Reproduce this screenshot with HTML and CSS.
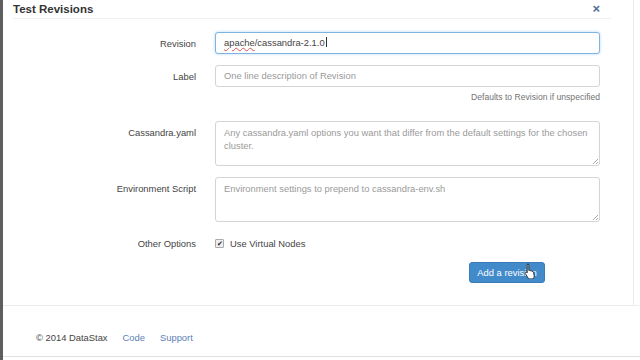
FILE: index.html
```html
<!DOCTYPE html>
<html lang="en">
<head>
    <meta charset="UTF-8">
    <title>Test Revisions</title>
    <link rel="stylesheet" href="styles.css">
</head>
<body>
    <div class="edge"></div>
    <div class="page">
        <div class="modal">
            <div class="modal-header">
                <h4>Test Revisions</h4>
                <span class="close">&times;</span>
            </div>

            <form class="form">
                <div class="row">
                    <label>Revision</label>
                    <div class="field">
                        <div class="input focused"><span class="typo">apache</span>/cassandra-2.1.0<span class="caret"></span></div>
                    </div>
                </div>
                <div class="row top">
                    <label>Label</label>
                    <div class="field">
                        <div class="input placeholder">One line description of Revision</div>
                        <p class="help">Defaults to Revision if unspecified</p>
                    </div>
                </div>
                <div class="row top">
                    <label>Cassandra.yaml</label>
                    <div class="field">
                        <div class="textarea placeholder">Any cassandra.yaml options you want that differ from the default settings for the chosen cluster.</div>
                    </div>
                </div>
                <div class="row top">
                    <label>Environment Script</label>
                    <div class="field">
                        <div class="textarea placeholder">Environment settings to prepend to cassandra-env.sh</div>
                    </div>
                </div>
                <div class="row options">
                    <label>Other Options</label>
                    <div class="field check">
                        <span class="box">&#10004;</span> Use Virtual Nodes
                    </div>
                </div>
                <div class="actions">
                    <button type="button" class="btn">Add a revision</button>
                    <!-- mouse pointer hovering the button -->
                    <svg class="pointer" width="12" height="16" viewBox="0 0 12 16">
                        <path d="M3.5 1.2c.8 0 1.3.5 1.3 1.2v5l.3-.1c.6-.3 1.3 0 1.5.5.6-.3 1.3 0 1.5.6.6-.2 1.3.1 1.4.7l.6 3.6c.2 1.3-.3 2.2-1 3.2H4.6L1.6 11c-.5-.6-.4-1.300.1-1.6.5-.3 1.1-.1 1.4.3l.1.2V2.4c0-.7.5-1.2 1.3-1.2z" fill="#fff" stroke="#222" stroke-width="0.9" stroke-linejoin="round"/>
                    </svg>
                </div>
            </form>
        </div>

        <footer class="footer">
            <span>&copy; 2014 DataStax</span>
            <a href="#">Code</a>
            <a href="#">Support</a>
        </footer>
    </div>
</body>
</html>
```

FILE: styles.css
```css
body {
    margin: 0;
    width: 640px;
    height: 360px;
    overflow: hidden;
    display: flex;
    background: #fff;
    font-family: "Liberation Sans", Arial, sans-serif;
    font-size: 9.4px;
    color: #333;
}
.edge {
    width: 3px;
    background: #5e5e5e;
}
.page {
    flex: 1;
    display: flex;
    flex-direction: column;
}
.modal {
    height: 305px;
    width: 631px;
    border-right: 1px solid #ececec;
    box-sizing: border-box;
}
.modal-header {
    margin: 0 22px 0 10px;
    height: 18px;
    border-bottom: 1px solid #f0f0f0;
    display: flex;
    justify-content: space-between;
    align-items: center;
}
.modal-header h4 {
    margin: 0;
    font-size: 11.5px;
    font-weight: bold;
    color: #333;
}
.close {
    font-size: 13px;
    font-weight: bold;
    color: #4f6f95;
    margin-right: 11px;
    position: relative;
    top: -1px;
}
.form {
    padding-top: 13px;
}
.row {
    display: flex;
    align-items: center;
    margin-bottom: 11px;
}
.row.top {
    align-items: flex-start;
}
.row label {
    width: 193px;
    text-align: right;
    color: #444;
    padding-right: 19px;
    flex-shrink: 0;
}
.row.top label {
    padding-top: 6px;
}
.row.options {
    margin-top: 16px;
    margin-bottom: 13px;
}
.field {
    width: 385px;
}
.input, .textarea {
    box-sizing: border-box;
    border: 1px solid #d4d4d4;
    border-radius: 3px;
    padding: 0 8px;
    color: #555;
    background: #fff;
}
.input {
    height: 22px;
    line-height: 20px;
}
.input.focused {
    border-color: #7fb3e0;
    box-shadow: 0 0 3px rgba(102, 175, 233, 0.5);
    color: #444;
}
.typo {
    text-decoration: underline wavy #d9534f;
    text-decoration-thickness: 1px;
}
.caret {
    display: inline-block;
    width: 1px;
    height: 10px;
    background: #333;
    vertical-align: -1px;
    margin-left: 1px;
}
.placeholder {
    color: #9a9a9a;
}
.textarea {
    height: 45px;
    padding-top: 4px;
    line-height: 13px;
    position: relative;
}
.textarea::after {
    content: "";
    position: absolute;
    right: 1px;
    bottom: 1px;
    width: 5px;
    height: 5px;
    background: linear-gradient(135deg, transparent 45%, #aaa 45%, #aaa 55%, transparent 55%, transparent 75%, #aaa 75%, #aaa 85%, transparent 85%);
}
.help {
    margin: 5px 0 8px;
    text-align: right;
    font-size: 8.6px;
    color: #737373;
}
.check {
    display: flex;
    align-items: center;
    gap: 6px;
    color: #444;
}
.box {
    width: 7px;
    height: 7px;
    border: 1px solid #aaa;
    border-radius: 1px;
    background: #eee;
    font-size: 7px;
    line-height: 7px;
    text-align: center;
    color: #222;
}
.actions {
    padding-left: 466px;
    position: relative;
}
.btn {
    width: 76px;
    height: 21px;
    border: 1px solid #3a7cb8;
    border-radius: 3px;
    background: #428bca;
    color: #fff;
    font-family: inherit;
    font-size: 9.4px;
    padding: 0;
    cursor: pointer;
}
.pointer {
    position: absolute;
    left: 521px;
    top: 1px;
}
.footer {
    border-top: 1px solid #ececec;
    border-bottom: 1px solid #e0e0e0;
    height: 52px;
    box-sizing: border-box;
    display: flex;
    align-items: center;
    padding: 12px 0 0 33px;
    gap: 15px;
    color: #444;
}
.footer a {
    color: #5b82b6;
    text-decoration: none;
}
```
